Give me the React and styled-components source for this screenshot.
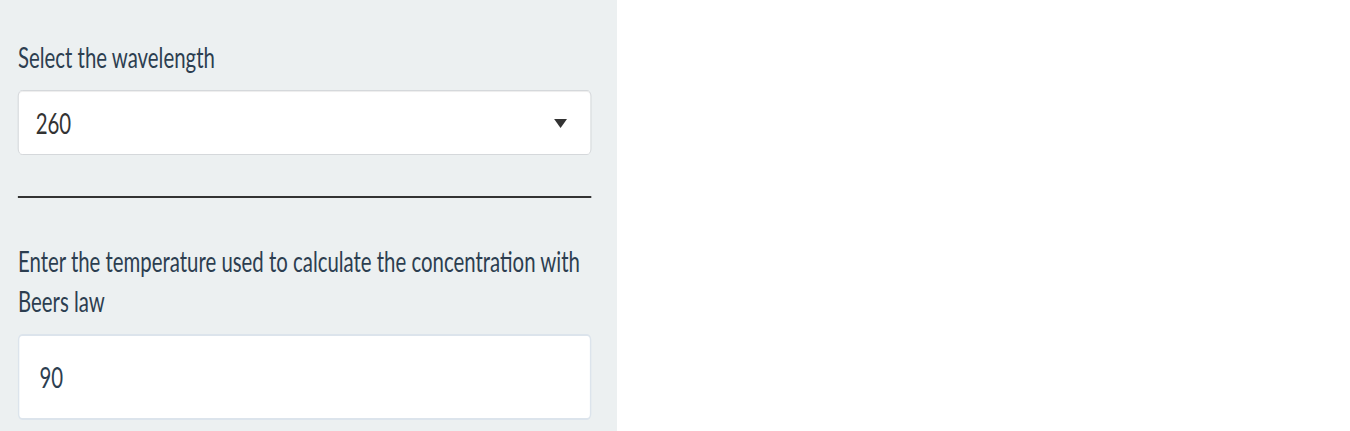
import React from "react";
import styled, { createGlobalStyle } from "styled-components";

const SQUEEZE = 0.715;

const GlobalStyle = createGlobalStyle`
  html, body {
    margin: 0;
    padding: 0;
    background: #ffffff;
  }
  body {
    font-family: Lato, "Open Sans", sans-serif;
  }
  * { box-sizing: border-box; }
`;

const Page = styled.div`
  display: flex;
  min-height: 431px;
`;

const Sidebar = styled.aside`
  width: 617px;
  min-height: 431px;
  background: #ecf0f1;
  overflow: hidden;
  flex: none;
`;

const Well = styled.div`
  width: ${617 / SQUEEZE}px;
  transform: scaleX(${SQUEEZE});
  transform-origin: 0 0;
  padding: 37px ${26 / SQUEEZE}px 0 ${18 / SQUEEZE}px;
  display: flex;
  flex-direction: column;
`;

const Field = styled.div`
  display: flex;
  flex-direction: column;
`;

const Label = styled.label`
  font-family: Lato, "Open Sans", sans-serif;
  font-size: 28.5px;
  line-height: 40px;
  font-weight: 400;
  color: #2c3e50;
  margin-bottom: 13px;
`;

const SelectBox = styled.div`
  height: 65px;
  background: #ffffff;
  border: 1.4px solid #cfd3d6;
  border-radius: 6px;
  box-shadow: inset 0 1px 1px rgba(0, 0, 0, 0.075);
  display: flex;
  align-items: center;
  justify-content: space-between;
  padding: 0 ${23 / SQUEEZE}px 0 ${17 / SQUEEZE}px;
`;

const SelectValue = styled.span`
  font-family: Lato, "Open Sans", sans-serif;
  font-size: 28.5px;
  line-height: 40px;
  color: #333333;
`;

const Caret = styled.span`
  width: 0;
  height: 0;
  border-style: solid;
  border-width: 9px ${6.5 / SQUEEZE}px 0 ${6.5 / SQUEEZE}px;
  border-color: #333333 transparent transparent transparent;
  margin-top: 1px;
`;

const Rule = styled.hr`
  margin: 41px 0 43px 0;
  border: 0;
  border-top: 2px solid #333333;
  height: 0;
`;

const TextInput = styled.input`
  height: 86px;
  width: 100%;
  background: #ffffff;
  border: 2.8px solid #dce4ec;
  border-top-width: 2px;
  border-bottom-width: 2px;
  border-radius: 6px;
  padding: 0 0 0 ${20 / SQUEEZE}px;
  font-family: Lato, "Open Sans", sans-serif;
  font-size: 28.5px;
  line-height: 40px;
  color: #2c3e50;
  outline: none;
  box-shadow: none;
`;

export default function App() {
  return (
    <>
      <GlobalStyle />
      <Page>
        <Sidebar>
          <Well>
            <Field>
              <Label htmlFor="wavelength">Select the wavelength</Label>
              <SelectBox id="wavelength" role="combobox" aria-expanded="false">
                <SelectValue>260</SelectValue>
                <Caret />
              </SelectBox>
            </Field>
            <Rule />
            <Field>
              <Label htmlFor="temperature">
                Enter the temperature used to calculate the concentration with Beers law
              </Label>
              <TextInput id="temperature" type="text" defaultValue="90" readOnly />
            </Field>
          </Well>
        </Sidebar>
      </Page>
    </>
  );
}
